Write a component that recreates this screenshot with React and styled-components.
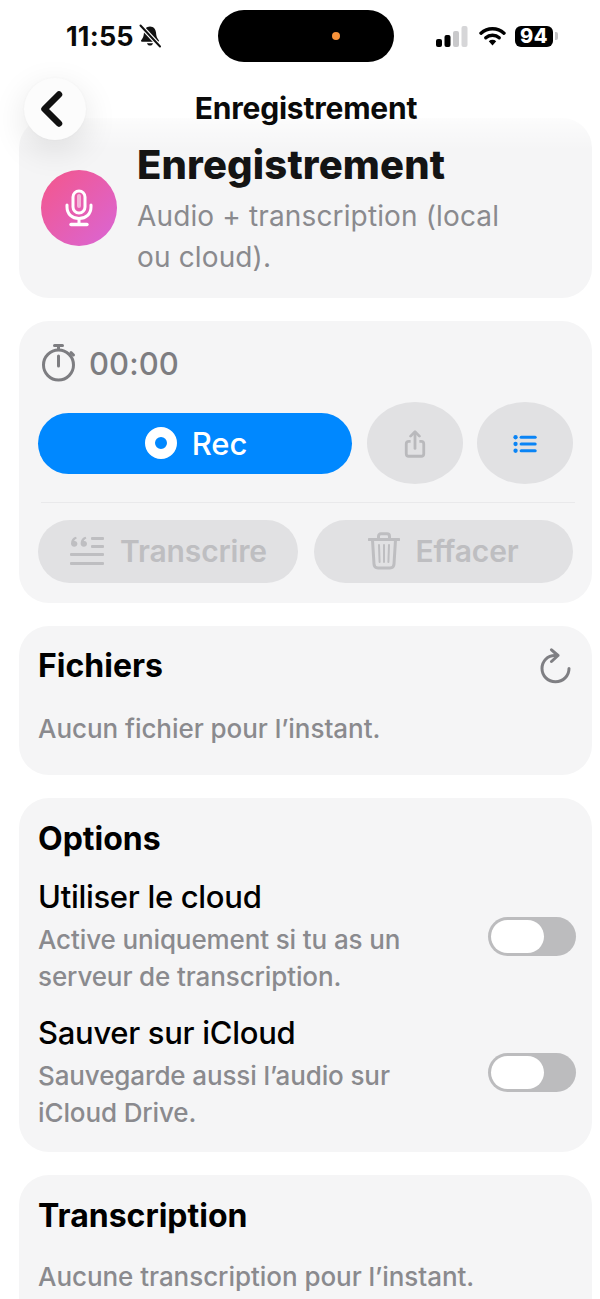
import React from "react";
import styled, { createGlobalStyle } from "styled-components";

const GlobalStyle = createGlobalStyle`
  html, body { margin: 0; padding: 0; background: #fff; }
  body { font-family: Inter, "Noto Sans", "Liberation Sans", sans-serif; }
  * { box-sizing: border-box; }
`;

const Screen = styled.div`
  position: relative;
  width: 600px;
  height: 1299px;
  overflow: hidden;
  background: #fff;
`;

/* top bars float over the scrolled content */
const TopOverlay = styled.header`
  position: absolute;
  top: 0;
  left: 0;
  right: 0;
  height: 150px;
  z-index: 2;
  background: linear-gradient(
    to bottom,
    #fff 0,
    #fff 112px,
    rgba(255, 255, 255, 0.55) 124px,
    rgba(255, 255, 255, 0) 150px
  );
`;

const StatusBar = styled.div`
  display: grid;
  grid-template-columns: 218px 176px 1fr;
  height: 68px;
  padding-top: 10px;
`;

const StatusLeft = styled.div`
  display: flex;
  align-items: center;
  height: 52px;
  padding-left: 66px;
  gap: 4px;
`;

const Clock = styled.span`
  font-size: 27px;
  font-weight: 700;
  color: #0a0a0a;
  letter-spacing: 0.2px;
`;

const Island = styled.div`
  position: relative;
  height: 52px;
  border-radius: 26px;
  background: #000;
`;

const CameraDot = styled.span`
  position: absolute;
  left: 114px;
  top: 22px;
  width: 8px;
  height: 8px;
  border-radius: 50%;
  background: #f7923a;
`;

const StatusRight = styled.div`
  display: flex;
  align-items: center;
  height: 52px;
  padding-left: 42px;
`;

const Battery = styled.div`
  display: flex;
  align-items: center;
  justify-content: center;
  width: 38px;
  height: 21px;
  margin-left: 9px;
  border-radius: 6px;
  background: #000;
  color: #fff;
  font-size: 20px;
  font-weight: 800;
  letter-spacing: 0.4px;
`;

const BatteryTip = styled.span`
  width: 3px;
  height: 8px;
  margin-left: 2px;
  border-radius: 0 2px 2px 0;
  background: #c4c4c6;
`;

const NavBar = styled.nav`
  display: grid;
  grid-template-columns: 1fr auto 1fr;
  align-items: center;
  height: 62px;
  padding: 0 12px 0 24px;
  margin-top: 10px;
`;

const BackButton = styled.button`
  display: flex;
  align-items: center;
  justify-content: center;
  width: 62px;
  height: 62px;
  padding: 0 6px 0 0;
  border: 0;
  border-radius: 50%;
  background: #fcfcfc;
  box-shadow: 0 10px 34px rgba(0, 0, 0, 0.11), 0 0 3px rgba(0, 0, 0, 0.03);
`;

const NavTitle = styled.h1`
  margin: -2px 0 0;
  font-size: 30px;
  font-weight: 700;
  color: #0a0a0a;
  letter-spacing: -0.2px;
`;

const Content = styled.main`
  display: flex;
  flex-direction: column;
  gap: 23px;
  padding: 118px 8px 0 19px;
`;

const Card = styled.section`
  border-radius: 30px;
  background: #f5f5f6;
`;

const HeroCard = styled(Card)`
  display: flex;
  align-items: flex-start;
  gap: 20px;
  height: 180px;
  padding: 24px 22px 0 22px;
`;

const HeroIcon = styled.div`
  display: flex;
  flex: none;
  align-items: center;
  justify-content: center;
  width: 76px;
  height: 76px;
  margin-top: 28px;
  border-radius: 50%;
  background: linear-gradient(135deg, #f4568a 0%, #d966d6 100%);
`;

const HeroTitle = styled.h2`
  margin: 0;
  font-size: 40px;
  line-height: 46px;
  font-weight: 800;
  color: #141414;
  letter-spacing: 0.15px;
`;

const HeroText = styled.p`
  margin: 8px 0 0;
  width: 385px;
  font-size: 28px;
  line-height: 41px;
  font-weight: 400;
  color: #8a8a8e;
  letter-spacing: 0.14px;
`;

const RecorderCard = styled(Card)`
  height: 282px;
  padding: 23px 19px 0;
`;

const TimerRow = styled.div`
  display: flex;
  align-items: center;
  gap: 13px;
  height: 38px;
  padding-left: 3px;
`;

const TimerText = styled.span`
  font-size: 31px;
  font-weight: 500;
  color: #7d7d81;
  letter-spacing: 0.1px;
`;

const ControlRow = styled.div`
  display: grid;
  grid-template-columns: 314px 96px 96px;
  column-gap: 14.5px;
  align-items: center;
  margin-top: 20px;
`;

const RecButton = styled.button`
  display: flex;
  align-items: center;
  justify-content: center;
  gap: 15px;
  height: 61px;
  padding: 0 0 0 2px;
  border: 0;
  border-radius: 31px;
  background: #0088ff;
  color: #fff;
  font-family: inherit;
  font-size: 31px;
  font-weight: 500;
  letter-spacing: -0.1px;
`;

const RecDot = styled.span`
  width: 32px;
  height: 32px;
  border: 10px solid #fff;
  border-radius: 50%;
`;

const RoundButton = styled.button`
  display: flex;
  align-items: center;
  justify-content: center;
  height: 82px;
  padding: 2px 0 0;
  border: 0;
  border-radius: 50%;
  background: #e1e1e3;
`;

const Divider = styled.hr`
  height: 1px;
  margin: 18px -2px 17px 3px;
  border: 0;
  background: #e9e9eb;
`;

const ActionRow = styled.div`
  display: grid;
  grid-template-columns: 260px 259px;
  gap: 16px;
  align-items: center;
`;

const ActionButton = styled.button`
  display: flex;
  align-items: center;
  justify-content: center;
  gap: 15px;
  height: 63px;
  padding: 0 0 2px;
  border: 0;
  border-radius: 32px;
  background: #e1e1e3;
  color: #bebec1;
  font-family: inherit;
  font-size: 30px;
  font-weight: 600;
  letter-spacing: -0.15px;
`;

const BlockCard = styled(Card)`
  padding: 21px 19px 0;
  height: ${({ $height }) => $height}px;
`;

const CardHeader = styled.div`
  display: flex;
  align-items: center;
  justify-content: space-between;
  margin-top: -1px;
  padding-right: 2px;
`;

const CardTitle = styled.h3`
  margin: 0;
  font-size: 32px;
  line-height: 40px;
  font-weight: 700;
  color: #000;
`;

const MutedText = styled.p`
  margin: ${({ $top }) => $top}px 0 0;
  font-size: 26px;
  line-height: 38px;
  font-weight: 500;
  color: #8a8a8e;
  letter-spacing: -0.05px;
`;

const OptionRow = styled.div`
  display: grid;
  grid-template-columns: 1fr 88px;
  align-items: center;
  margin-top: ${({ $top }) => $top}px;
`;

const OptionTitle = styled.div`
  font-size: 31px;
  line-height: 40px;
  font-weight: 500;
  color: #000;
  letter-spacing: -0.3px;
`;

const OptionText = styled.div`
  width: 400px;
  margin-top: 4px;
  font-size: 26px;
  line-height: 37px;
  font-weight: 500;
  color: #8a8a8e;
  letter-spacing: -0.12px;
`;

const Toggle = styled.div`
  display: flex;
  align-items: center;
  width: 88px;
  height: 39px;
  margin-left: 3px;
  padding: 3px;
  border-radius: 20px;
  background: #bcbcbe;
`;

const ToggleThumb = styled.span`
  width: 53px;
  height: 33px;
  border-radius: 17px;
  background: #fff;
`;

const ChevronIcon = () => (
  <svg width="28" height="38" viewBox="0 0 28 38" fill="none">
    <path d="M21 4.5 L6.5 19 L21 33.5" stroke="#111" strokeWidth="6.5" strokeLinecap="round" strokeLinejoin="round" />
  </svg>
);

const MutedBell = () => (
  <svg width="24" height="24" viewBox="0 0 24 24">
    <path d="M12 2.4c-3.7 0-5.7 2.9-6 6.2-.3 3.6-.9 5.6-2.8 7.6-.5.7-.1 1.5.8 1.5h16c.9 0 1.3-.8.8-1.5-1.9-2-2.5-4-2.8-7.6-.3-3.3-2.3-6.2-6-6.2z" fill="#111" />
    <path d="M9 19.2c.4 1.5 1.5 2.4 3 2.4s2.6-.9 3-2.4z" fill="#111" />
    <path d="M2.5 1.5 L22 22.5" stroke="#fff" strokeWidth="4.4" />
    <path d="M2.5 1.5 L22 22.5" stroke="#111" strokeWidth="2" strokeLinecap="round" />
  </svg>
);

const SignalBars = () => (
  <svg width="32" height="21" viewBox="0 0 32 21">
    <rect x="0" y="13" width="6" height="8" rx="2" fill="#000" />
    <rect x="8.5" y="9" width="6" height="12" rx="2" fill="#000" />
    <rect x="17" y="5" width="6" height="16" rx="2" fill="#c9c9cb" />
    <rect x="25.5" y="0" width="6" height="21" rx="2" fill="#d6d6d8" />
  </svg>
);

const WifiIcon = () => (
  <svg width="27" height="20" viewBox="0 0 27 20" fill="none" style={{ marginLeft: 11 }}>
    <path d="M2 7.2 C8.5 1.2 18.5 1.2 25 7.2" stroke="#000" strokeWidth="3.4" strokeLinecap="round" />
    <path d="M6.8 11.8 C10.5 8.4 16.5 8.4 20.2 11.8" stroke="#000" strokeWidth="3.4" strokeLinecap="round" />
    <path d="M9.8 15.2 L13.5 19.4 L17.2 15.2 C15 13.4 12 13.4 9.8 15.2z" fill="#000" />
  </svg>
);

const MicIcon = () => (
  <svg width="30" height="38" viewBox="0 0 30 38" fill="none">
    <rect x="9" y="2" width="12" height="22" rx="6" stroke="#fff" strokeWidth="3" />
    <rect x="13" y="5" width="4" height="14" rx="2" fill="#fff" opacity="0.55" />
    <path d="M3 16 V18 C3 25 8 29.5 15 29.5 C22 29.5 27 25 27 18 V16" stroke="#fff" strokeWidth="3" strokeLinecap="round" />
    <path d="M15 29.5 V35" stroke="#fff" strokeWidth="3" />
    <path d="M7 35.5 H23" stroke="#fff" strokeWidth="3.4" strokeLinecap="round" />
  </svg>
);

const StopwatchIcon = () => (
  <svg width="35" height="38" viewBox="0 0 35 38" fill="none" stroke="#7d7d81">
    <circle cx="17.5" cy="21" r="15" strokeWidth="3" />
    <path d="M17.5 6 V1.5" strokeWidth="3" />
    <path d="M13.5 1.5 H21.5" strokeWidth="3" strokeLinecap="round" />
    <path d="M30 8.5 L32.5 11" strokeWidth="3" strokeLinecap="round" />
    <path d="M17.5 12 V22" strokeWidth="3" strokeLinecap="round" />
  </svg>
);

const ShareIcon = () => (
  <svg width="22" height="28" viewBox="0 0 24 32" fill="none" stroke="#b9b9bc" strokeWidth="3.2">
    <path d="M7 13 H5 C3 13 2 14 2 16 V27 C2 29 3 30 5 30 H19 C21 30 22 29 22 27 V16 C22 14 21 13 19 13 H17" />
    <path d="M12 21 V3" strokeLinecap="round" />
    <path d="M7 7 L12 2 L17 7" strokeLinecap="round" strokeLinejoin="round" />
  </svg>
);

const ListIcon = () => (
  <svg width="24" height="18" viewBox="0 0 26 20" fill="#0a84f5">
    <circle cx="2.5" cy="2.5" r="2.4" />
    <circle cx="2.5" cy="10" r="2.4" />
    <circle cx="2.5" cy="17.5" r="2.4" />
    <rect x="7" y="0.8" width="19" height="3.4" rx="1.7" />
    <rect x="7" y="8.3" width="19" height="3.4" rx="1.7" />
    <rect x="7" y="15.8" width="19" height="3.4" rx="1.7" />
  </svg>
);

const QuoteLinesIcon = () => (
  <svg width="36" height="30" viewBox="-1 0 36 30" fill="#bebec1">
    <path d="M1 7.5 C1 4 3 1.5 6 0.8 L6.8 2.4 C5.2 3 4.4 4 4.2 5 C6 4.8 7.4 6 7.4 7.8 C7.4 9.5 6 10.8 4.2 10.8 C2.2 10.8 1 9.4 1 7.5z" />
    <path d="M10.6 7.5 C10.6 4 12.6 1.5 15.6 0.8 L16.4 2.4 C14.8 3 14 4 13.8 5 C15.6 4.8 17 6 17 7.8 C17 9.5 15.6 10.8 13.8 10.8 C11.8 10.8 10.6 9.4 10.6 7.5z" />
    <rect x="21" y="1" width="13" height="3" rx="1" />
    <rect x="21" y="9" width="13" height="3" rx="1" />
    <rect x="0" y="17" width="34" height="3" rx="1" />
    <rect x="0" y="26" width="34" height="3" rx="1" />
  </svg>
);

const TrashIcon = () => (
  <svg width="32" height="38" viewBox="0 0 32 38" fill="none" stroke="#bebec1" strokeWidth="3">
    <path d="M1 7.5 H31" strokeLinecap="round" />
    <path d="M10.5 7 V4.5 C10.5 2.8 11.5 1.8 13 1.8 H19 C20.5 1.8 21.5 2.8 21.5 4.5 V7" />
    <path d="M4.5 8 L6 32 C6.1 34.6 7.6 36 10 36 H22 C24.4 36 25.9 34.6 26 32 L27.5 8" />
    <path d="M11 13 L11.6 30 M16 13 V30 M21 13 L20.4 30" strokeWidth="2" strokeLinecap="round" />
  </svg>
);

const RefreshIcon = () => (
  <svg width="31" height="36" viewBox="0 0 31 36" fill="none" stroke="#7f7f83" strokeWidth="3" strokeLinecap="round" strokeLinejoin="round">
    <path d="M15 7.5 C7.5 7.5 2 13.2 2 20.5 C2 27.8 7.8 33.8 15.5 33.8 C23.2 33.8 29 27.8 29 20.5" />
    <path d="M11.5 1.8 L18 7.5 L11.5 13.5" />
  </svg>
);

const OptionBlock = ({ title, lines, top }) => (
  <OptionRow $top={top}>
    <div>
      <OptionTitle>{title}</OptionTitle>
      <OptionText>{lines}</OptionText>
    </div>
    <Toggle>
      <ToggleThumb />
    </Toggle>
  </OptionRow>
);

export default function App() {
  return (
    <Screen>
      <GlobalStyle />
      <TopOverlay>
        <StatusBar>
          <StatusLeft>
            <Clock>11:55</Clock>
            <MutedBell />
          </StatusLeft>
          <Island>
            <CameraDot />
          </Island>
          <StatusRight>
            <SignalBars />
            <WifiIcon />
            <Battery>94</Battery>
            <BatteryTip />
          </StatusRight>
        </StatusBar>
        <NavBar>
          <BackButton aria-label="Retour">
            <ChevronIcon />
          </BackButton>
          <NavTitle>Enregistrement</NavTitle>
          <span />
        </NavBar>
      </TopOverlay>

      <Content>
        <HeroCard>
          <HeroIcon>
            <MicIcon />
          </HeroIcon>
          <div>
            <HeroTitle>Enregistrement</HeroTitle>
            <HeroText>Audio + transcription (local ou cloud).</HeroText>
          </div>
        </HeroCard>

        <RecorderCard>
          <TimerRow>
            <StopwatchIcon />
            <TimerText>00:00</TimerText>
          </TimerRow>
          <ControlRow>
            <RecButton>
              <RecDot />
              Rec
            </RecButton>
            <RoundButton aria-label="Partager">
              <ShareIcon />
            </RoundButton>
            <RoundButton aria-label="Liste">
              <ListIcon />
            </RoundButton>
          </ControlRow>
          <Divider />
          <ActionRow>
            <ActionButton>
              <QuoteLinesIcon />
              Transcrire
            </ActionButton>
            <ActionButton>
              <TrashIcon />
              Effacer
            </ActionButton>
          </ActionRow>
        </RecorderCard>

        <BlockCard $height={149}>
          <CardHeader>
            <CardTitle>Fichiers</CardTitle>
            <RefreshIcon />
          </CardHeader>
          <MutedText $top={24}>Aucun fichier pour l’instant.</MutedText>
        </BlockCard>

        <BlockCard $height={354}>
          <CardTitle>Options</CardTitle>
          <OptionBlock
            top={18}
            title="Utiliser le cloud"
            lines="Active uniquement si tu as un serveur de transcription."
          />
          <OptionBlock
            top={18}
            title="Sauver sur iCloud"
            lines="Sauvegarde aussi l’audio sur iCloud Drive."
          />
        </BlockCard>

        <BlockCard $height={200}>
          <CardTitle>Transcription</CardTitle>
          <MutedText $top={22}>Aucune transcription pour l’instant.</MutedText>
        </BlockCard>
      </Content>
    </Screen>
  );
}
